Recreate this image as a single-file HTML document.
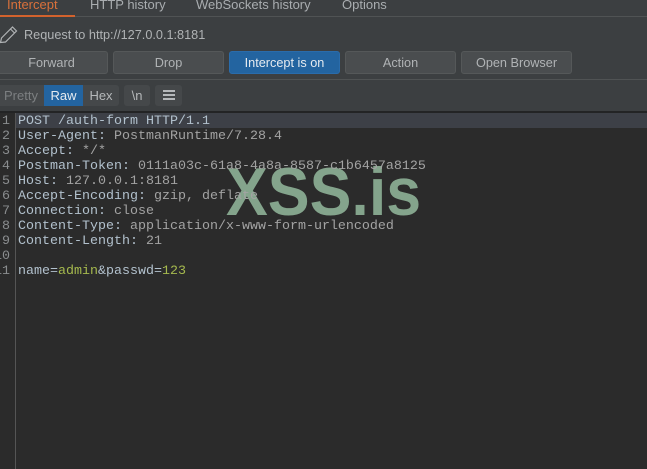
<!DOCTYPE html>
<html><head><meta charset="utf-8"><style>
html,body{margin:0;padding:0;width:647px;height:469px;overflow:hidden;background:#2b2b2b}
body{position:relative;font-family:"Liberation Sans",sans-serif}
.a{position:absolute;white-space:pre}
.top{position:absolute;left:0;top:0;width:647px;height:111px;background:#3c3f41}
.tab{position:absolute;top:-3px;font-size:13px;line-height:15px;color:#a9adb0;white-space:pre}
.btn{position:absolute;top:51px;height:23px;box-sizing:border-box;border:1px solid #555859;border-radius:3px;background:#4a4d4f;color:#b0b3b5;font-size:12.7px;line-height:22px;text-align:center}
.seg{position:absolute;top:85px;height:21px;font-size:13px;line-height:22px;text-align:center;background:#45484a;color:#b5b8ba}
.ed{position:absolute;left:18px;font-family:"Liberation Mono",monospace;font-size:13.33px;line-height:15px;white-space:pre;color:#b2c1cd}
.n{position:absolute;right:637px;font-family:"Liberation Mono",monospace;font-size:13.33px;line-height:15px;color:#8a8d8f}
.v{color:#a3a3a3}.g{color:#a5b94e}
</style></head><body>
<div class="top"></div>
<div class="tab" style="left:7px;color:#d9713b">Intercept</div>
<div class="a" style="left:0;top:15px;width:75px;height:2px;background:#d2622d"></div>
<div class="tab" style="left:90px">HTTP history</div>
<div class="tab" style="left:196px">WebSockets history</div>
<div class="tab" style="left:342px">Options</div>
<div class="a" style="left:75px;top:16px;width:572px;height:1px;background:#505354"></div>
<svg class="a" style="left:0;top:25px" width="18" height="20" viewBox="0 0 18 20"><path d="M0.5 17.5L1.5 13L12.5 2L16.5 6L5.5 17ZM10.5 4L14.5 8" fill="none" stroke="#b0b3b5" stroke-width="1.2"/></svg>
<div class="a" style="left:24px;top:28px;font-size:12.7px;line-height:15px;color:#b0b3b5">Request to http://127.0.0.1:8181</div>
<div class="btn" style="left:-5px;width:113px">Forward</div>
<div class="btn" style="left:113px;width:111px">Drop</div>
<div class="btn" style="left:229px;width:111px;background:#2364a0;border-color:#2a6cab;color:#e6ebf0">Intercept is on</div>
<div class="btn" style="left:345px;width:111px">Action</div>
<div class="btn" style="left:461px;width:111px">Open Browser</div>
<div class="a" style="left:0;top:79px;width:647px;height:1px;background:#505354"></div>
<div class="seg" style="left:0;width:44px;color:#7c7f81;text-align:left;text-indent:4px">Pretty</div>
<div class="seg" style="left:44px;width:39px;background:#2364a0;color:#e6ebf0">Raw</div>
<div class="seg" style="left:83px;width:36px;border-radius:0 3px 3px 0">Hex</div>
<div class="seg" style="left:124px;width:26px;border-radius:3px">\n</div>
<div class="seg" style="left:155px;width:27px;border-radius:3px"></div>
<div class="a" style="left:163px;top:90px;width:12px;height:2px;background:#b5b8ba"></div>
<div class="a" style="left:163px;top:94px;width:12px;height:2px;background:#b5b8ba"></div>
<div class="a" style="left:163px;top:98px;width:12px;height:2px;background:#b5b8ba"></div>
<div class="a" style="left:0;top:111px;width:647px;height:2px;background:#232425"></div>
<div class="a" style="left:16px;top:113px;width:631px;height:15px;background:#3d4047"></div>
<div class="a" style="left:15px;top:113px;width:1px;height:356px;background:#555"></div>
<div class="n" style="top:114px">1</div><div class="n" style="top:129px">2</div><div class="n" style="top:144px">3</div><div class="n" style="top:159px">4</div><div class="n" style="top:174px">5</div><div class="n" style="top:189px">6</div><div class="n" style="top:204px">7</div><div class="n" style="top:219px">8</div><div class="n" style="top:234px">9</div><div class="n" style="top:249px">10</div><div class="n" style="top:264px">11</div>
<div class="a" style="left:226px;top:158px;font-size:62.7px;line-height:72px;font-weight:bold;color:#84a48c;transform-origin:0 56.8px;transform:scaleY(1.08)">XSS.is</div>
<div class="ed" style="top:114px">POST /auth-form HTTP/1.1</div>
<div class="ed" style="top:129px">User-Agent: <span class="v">PostmanRuntime/7.28.4</span></div>
<div class="ed" style="top:144px">Accept: <span class="v">*/*</span></div>
<div class="ed" style="top:159px">Postman-Token: <span class="v">0111a03c-61a8-4a8a-8587-c1b6457a8125</span></div>
<div class="ed" style="top:174px">Host: <span class="v">127.0.0.1:8181</span></div>
<div class="ed" style="top:189px">Accept-Encoding: <span class="v">gzip, deflate</span></div>
<div class="ed" style="top:204px">Connection: <span class="v">close</span></div>
<div class="ed" style="top:219px">Content-Type: <span class="v">application/x-www-form-urlencoded</span></div>
<div class="ed" style="top:234px">Content-Length: <span class="v">21</span></div>
<div class="ed" style="top:264px">name=<span class="g">admin</span>&amp;passwd=<span class="g">123</span></div>
</body></html>
